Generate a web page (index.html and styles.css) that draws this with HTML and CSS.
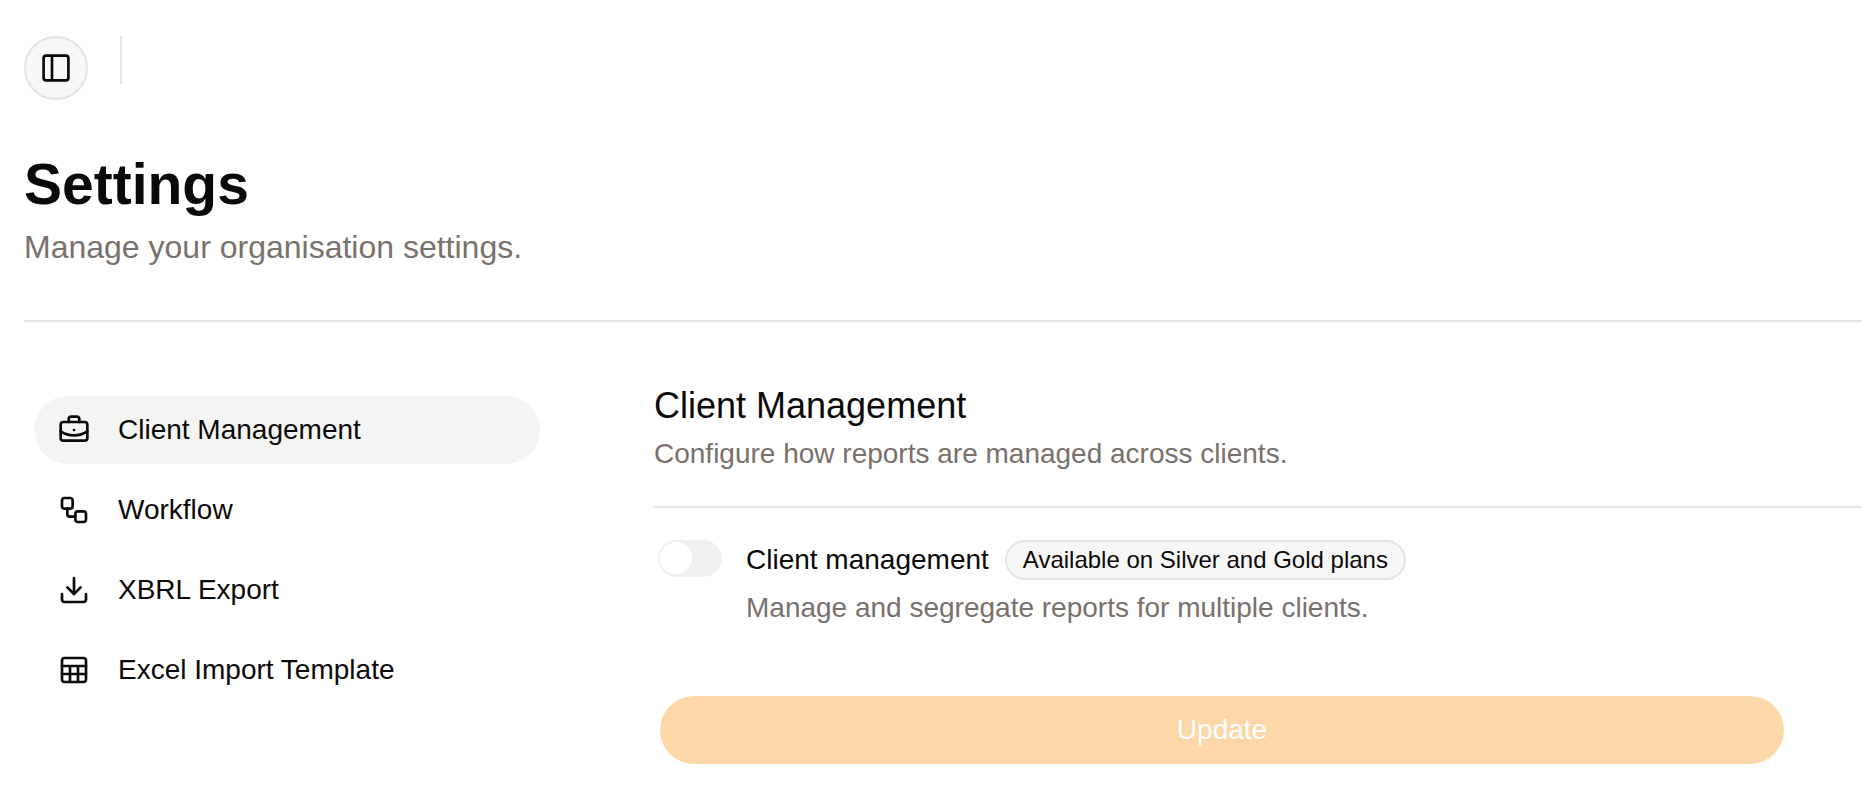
FILE: index.html
```
<!DOCTYPE html>
<html lang="en">
<head>
    <meta charset="UTF-8">
    <meta name="viewport" content="width=device-width, initial-scale=1.0">
    <title>Settings</title>
    <link rel="stylesheet" href="styles.css">
</head>
<body>
    <header class="topbar">
        <button type="button" class="sidebar-toggle" aria-label="Toggle sidebar">
            <svg class="icon" viewBox="0 0 24 24"><rect x="2.7" y="2.7" width="18.6" height="18.6" rx="2"/><path d="M9 3v18"/></svg>
        </button>
        <div class="topbar-separator"></div>
    </header>

    <main class="page">
        <h1 class="page-title">Settings</h1>
        <p class="page-subtitle">Manage your organisation settings.</p>
        <hr class="divider">

        <div class="layout">
            <nav class="settings-nav">
                <a href="#client-management" class="nav-item active">
                    <svg class="icon" viewBox="0 0 24 24"><rect x="2" y="6" width="20" height="14" rx="2"/><path d="M16 6V4a2 2 0 0 0-2-2h-4a2 2 0 0 0-2 2v2"/><path d="M22 13a18.15 18.15 0 0 1-20 0"/><path d="M12 12h.01"/></svg>
                    Client Management
                </a>
                <a href="#workflow" class="nav-item">
                    <svg class="icon" viewBox="0 0 24 24"><rect x="3" y="3" width="8" height="8" rx="2"/><path d="M7 11v4a2 2 0 0 0 2 2h4"/><rect x="13" y="13" width="8" height="8" rx="2"/></svg>
                    Workflow
                </a>
                <a href="#xbrl-export" class="nav-item">
                    <svg class="icon" viewBox="0 0 24 24"><path d="M21 15v4a2 2 0 0 1-2 2H5a2 2 0 0 1-2-2v-4"/><path d="M7 10l5 5 5-5"/><path d="M12 15V3"/></svg>
                    XBRL Export
                </a>
                <a href="#excel-import" class="nav-item">
                    <svg class="icon" viewBox="0 0 24 24"><rect x="3" y="3" width="18" height="18" rx="2"/><path d="M3 9h18M3 15h18M9 9v12M15 9v12"/></svg>
                    Excel Import Template
                </a>
            </nav>

            <section class="content" id="client-management">
                <h2 class="section-title">Client Management</h2>
                <p class="section-text">Configure how reports are managed across clients.</p>
                <hr class="divider section-divider">

                <form class="settings-form">
                    <div class="setting">
                        <input type="checkbox" role="switch" class="switch" id="clientSwitch" aria-describedby="clientHelp">
                        <div>
                            <div class="setting-head">
                                <label for="clientSwitch">Client management</label>
                                <span class="badge">Available on Silver and Gold plans</span>
                            </div>
                            <p class="setting-text" id="clientHelp">Manage and segregate reports for multiple clients.</p>
                        </div>
                    </div>
                    <button type="submit" class="update-btn" disabled>Update</button>
                </form>
            </section>
        </div>
    </main>
</body>
</html>
```
FILE: styles.css
```
* {
    box-sizing: border-box;
}

body {
    margin: 0;
    padding: 36px 0 24px 24px;
    font-family: "Liberation Sans", Arial, sans-serif;
    font-size: 28px;
    line-height: 40px;
    color: #0c0a09;
    background-color: #fff;
}

h1, h2, p {
    margin: 0;
    font-weight: normal;
}

.icon {
    width: 32px;
    height: 32px;
    flex-shrink: 0;
    fill: none;
    stroke: currentColor;
    stroke-width: 2;
    stroke-linecap: round;
    stroke-linejoin: round;
}

/* Top bar */
.topbar {
    display: flex;
    align-items: flex-start;
    gap: 32px;
}

.sidebar-toggle {
    display: flex;
    align-items: center;
    justify-content: center;
    width: 64px;
    height: 64px;
    padding: 0;
    border: 2px solid #e5e5e5;
    border-radius: 50%;
    background-color: #f7f7f7;
    color: inherit;
    cursor: pointer;
}

.topbar-separator {
    width: 2px;
    height: 48px;
    background-color: #e5e5e5;
}

/* Page heading */
.page {
    padding-top: 46px;
}

.page-title {
    font-size: 57px;
    line-height: 76px;
    font-weight: bold;
}

.page-subtitle {
    font-size: 32px;
    line-height: 50px;
    color: #78716c;
}

.divider {
    height: 2px;
    margin: 48px 0 60px;
    border: 0;
    background-color: #e5e5e5;
}

.layout {
    display: grid;
    grid-template-columns: 516px minmax(0, 1fr);
    gap: 114px;
}

/* Settings navigation */
.settings-nav {
    display: flex;
    flex-direction: column;
    gap: 12px;
    padding: 14px 0 0 10px;
}

.nav-item {
    display: flex;
    align-items: center;
    gap: 28px;
    padding: 14px 24px;
    border-radius: 34px;
    color: inherit;
    text-decoration: none;
}

.nav-item.active {
    background-color: #f4f4f3;
}

/* Section */
.section-title {
    margin-bottom: 4px;
    font-size: 36px;
    line-height: 48px;
}

.section-text,
.setting-text {
    color: #78716c;
}

.section-divider {
    margin: 32px 0;
}

.settings-form {
    padding-left: 4px;
}

.setting {
    display: flex;
    align-items: flex-start;
    gap: 24px;
}

.setting-head {
    display: flex;
    align-items: center;
    gap: 16px;
    margin-bottom: 8px;
}

.switch {
    appearance: none;
    display: flex;
    flex-shrink: 0;
    width: 64px;
    height: 37px;
    margin: 0;
    padding: 2px;
    border-radius: 20px;
    background-color: #f0f0f0;
    cursor: pointer;
}

.switch::before {
    content: "";
    width: 32px;
    height: 32px;
    border-radius: 50%;
    background-color: #fff;
}

.switch:checked {
    justify-content: flex-end;
    background-color: #f99d27;
}

.badge {
    padding: 0 16px;
    border: 2px solid #e5e5e5;
    border-radius: 20px;
    background-color: #f7f7f7;
    font-size: 24px;
    line-height: 36px;
}

.update-btn {
    display: block;
    width: calc(100% - 80px);
    margin: 68px 0 0 2px;
    padding: 14px;
    border: 0;
    border-radius: 34px;
    background-color: #fcd7a8;
    color: #fff;
    font: inherit;
}
```
